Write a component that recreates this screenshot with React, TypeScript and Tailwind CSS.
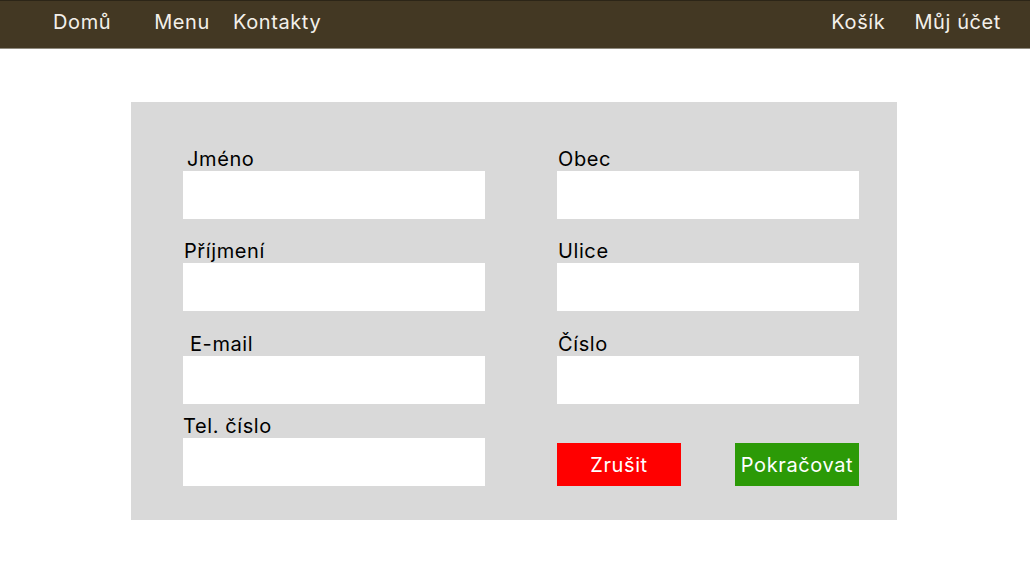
export default function App() {
  const Field = ({ label, mt, indent }: { label: string; mt: string; indent: string }) => (
    <div className={mt}>
      <div className={`h-6 text-[20px] leading-6 tracking-[0.6px] text-black ${indent}`}>{label}</div>
      <div className="h-12 w-[302px] bg-white" />
    </div>
  );

  return (
    <div className="min-h-[580px] w-[1030px] bg-white font-['Inter',sans-serif]">
      <nav className="flex h-[49px] items-center border-t border-b border-t-[#2c2517] border-b-[#8f8a7e] bg-[#433823] pb-[6px] text-[20px] tracking-[0.6px] text-[#f3f0ea]">
        <div className="flex pl-[53px]">
          <a className="mr-[43px]">Domů</a>
          <a className="mr-[23px]">Menu</a>
          <a>Kontakty</a>
        </div>
        <div className="ml-auto flex gap-[29px] pr-[29px]">
          <a>Košík</a>
          <a>Můj účet</a>
        </div>
      </nav>

      <div className="ml-[131px] mt-[53px] flex w-[766px] bg-[#d9d9d9] pb-[34px] pl-[52px] pt-[45px]">
        <div className="flex flex-col">
          <Field label="Jméno" mt="" indent="pl-[4px]" />
          <Field label="Příjmení" mt="mt-[20px]" indent="pl-[1px]" />
          <Field label="E-mail" mt="mt-[21px]" indent="pl-[7px]" />
          <Field label="Tel. číslo" mt="mt-[10px]" indent="" />
        </div>
        <div className="ml-[72px] flex flex-col">
          <Field label="Obec" mt="" indent="pl-[1px]" />
          <Field label="Ulice" mt="mt-[20px]" indent="pl-[1px]" />
          <Field label="Číslo" mt="mt-[21px]" indent="pl-[1px]" />
          <div className="mt-[39px] flex w-[302px] justify-between">
            <button className="h-[43px] w-[124px] bg-[#ff0000] text-[20px] tracking-[0.6px] text-white">Zrušit</button>
            <button className="h-[43px] w-[124px] bg-[#2c9a07] text-[20px] tracking-[0.6px] text-white">Pokračovat</button>
          </div>
        </div>
      </div>
    </div>
  );
}
